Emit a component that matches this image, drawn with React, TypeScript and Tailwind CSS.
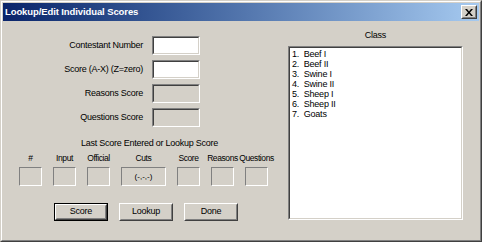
import React from "react";

const font = "font-['Liberation_Sans',Arial,sans-serif]";

function Sunken({ className = "", white = false, children }: { className?: string; white?: boolean; children?: React.ReactNode }) {
  return (
    <div className={`border border-t-[#808080] border-l-[#808080] border-r-white border-b-white ${className}`}>
      <div className={`w-full h-full border border-t-[#404040] border-l-[#404040] border-r-[#d4d0c8] border-b-[#d4d0c8] ${white ? "bg-white" : "bg-[#d4d0c8]"}`}>
        {children}
      </div>
    </div>
  );
}

function Flat({ className = "", children }: { className?: string; children?: React.ReactNode }) {
  return (
    <div className={`border border-t-[#808080] border-l-[#808080] border-r-white border-b-white flex items-center justify-center ${className}`}>
      {children}
    </div>
  );
}

function Button({ label, def = false }: { label: string; def?: boolean }) {
  const inner = (
    <div className="w-full h-full border border-t-white border-l-white border-r-[#404040] border-b-[#404040]">
      <div className="w-full h-full border border-t-[#d4d0c8] border-l-[#d4d0c8] border-r-[#808080] border-b-[#808080] flex items-center justify-center text-[9px] tracking-[-0.25px] text-black">
        {label}
      </div>
    </div>
  );
  return def ? (
    <div className="w-[54px] h-[18px] border border-black">{inner}</div>
  ) : (
    <div className="w-[54px] h-[18px]">{inner}</div>
  );
}

const rows = [
  { label: "Contestant Number", white: true },
  { label: "Score (A-X) (Z=zero)", white: true },
  { label: "Reasons Score", white: false },
  { label: "Questions Score", white: false },
];

const cols = [
  { label: "#", w: "w-[23px]", text: "" },
  { label: "Input", w: "w-[23px]", text: "" },
  { label: "Official", w: "w-[23px]", text: "" },
  { label: "Cuts", w: "w-[45px]", text: "(-,-,-)" },
  { label: "Score", w: "w-[23px]", text: "" },
  { label: "Reasons", w: "w-[23px]", text: "" },
  { label: "Questions", w: "w-[23px]", text: "" },
];

const classes = ["Beef I", "Beef II", "Swine I", "Swine II", "Sheep I", "Sheep II", "Goats"];

export default function App() {
  return (
    <div className={`w-[482px] h-[242px] ${font} border border-t-[#d4d0c8] border-l-[#d4d0c8] border-r-[#404040] border-b-[#404040] bg-[#d4d0c8]`}>
      <div className="w-full h-full border border-t-white border-l-white border-r-[#808080] border-b-[#808080] p-px flex flex-col">
        {/* title bar */}
        <div className="h-[18px] bg-gradient-to-r from-[#0a246a] to-[#a6caf0] flex items-center pl-[2px] pr-[2px]">
          <span className="text-white font-bold text-[9.5px] tracking-[-0.1px] leading-none">Lookup/Edit Individual Scores</span>
          <div className="ml-auto w-[16px] h-[14px] border border-t-white border-l-white border-r-[#404040] border-b-[#404040] bg-[#d4d0c8]">
            <div className="w-full h-full border border-t-[#d4d0c8] border-l-[#d4d0c8] border-r-[#808080] border-b-[#808080] flex items-center justify-center">
              <svg width="8" height="7" viewBox="0 0 8 7">
                <path d="M0 0h2l2 2.5L6 0h2L5 3.5 8 7H6L4 4.5 2 7H0l3-3.5z" fill="#000" />
              </svg>
            </div>
          </div>
        </div>
        {/* body */}
        <div className="flex-1 flex text-black">
          {/* left */}
          <div className="w-[285px] flex flex-col">
            <div className="mt-[15px] flex flex-col gap-[5px]">
              {rows.map((r) => (
                <div key={r.label} className="flex items-center h-[19px]">
                  <div className="w-[140px] text-right text-[9px] tracking-[-0.25px] whitespace-nowrap">{r.label}</div>
                  <Sunken white={r.white} className="ml-[9px] w-[48px] h-[19px]" />
                </div>
              ))}
            </div>
            <div className="mt-[11px] h-[12px] flex items-center justify-center text-[9px] tracking-[-0.25px] whitespace-nowrap pl-[8px]">
              Last Score Entered or Lookup Score
            </div>
            <div className="mt-[2px] ml-[16px] flex gap-[11px]">
              {cols.map((c) => (
                <div key={c.label} className={`${c.w} flex flex-col items-center`}>
                  <div className="h-[12px] flex items-center text-[8.5px] tracking-[-0.4px] whitespace-nowrap">{c.label}</div>
                  <Flat className={`${c.w} h-[19px] mt-[3px] text-[8px]`}>{c.text}</Flat>
                </div>
              ))}
            </div>
            <div className="mt-[17px] ml-[51px] flex gap-[11px]">
              <Button label="Score" def />
              <Button label="Lookup" />
              <Button label="Done" />
            </div>
          </div>
          {/* right */}
          <div className="flex flex-col">
            <div className="mt-[9px] h-[12px] flex items-center justify-center text-[9px] tracking-[-0.25px]">Class</div>
            <Sunken white className="mt-[4px] w-[175px] h-[174px]">
              <div className="pt-px pl-[2px] flex flex-col">
                {classes.map((c, i) => (
                  <div key={c} className="h-[10px] leading-[10px] text-[9px] tracking-[-0.2px] whitespace-pre">
                    {`${i + 1}.  ${c}`}
                  </div>
                ))}
              </div>
            </Sunken>
          </div>
        </div>
      </div>
    </div>
  );
}
